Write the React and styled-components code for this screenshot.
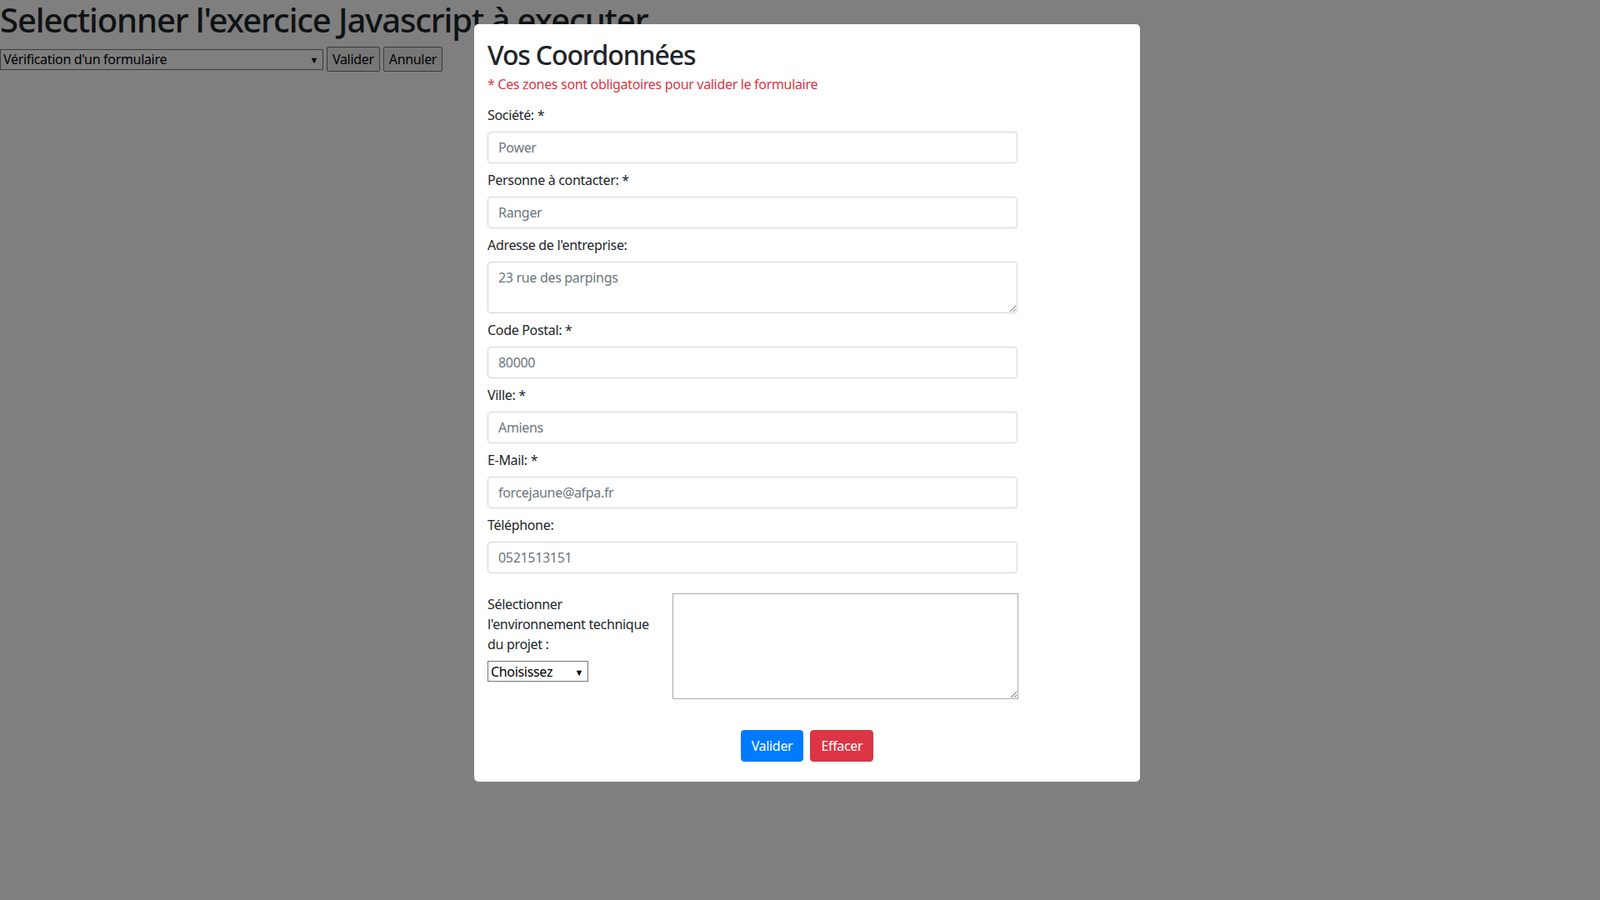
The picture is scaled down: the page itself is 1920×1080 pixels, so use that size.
import React from 'react'
import styled, { createGlobalStyle } from 'styled-components'

const GlobalStyle = createGlobalStyle`
  body {
    margin: 0;
    font-family: "Noto Sans", "Open Sans", sans-serif;
    font-size: 16px;
    line-height: 1.5;
    letter-spacing: -0.02em;
    color: #212529;
    background: #fff;
  }
`

const Page = styled.div`
  position: relative;
  min-height: 1080px;
`

const PageTitle = styled.h1`
  font-size: 40px;
  font-weight: 500;
  line-height: 1.2;
  letter-spacing: -0.028em;
  margin: 0 0 8px;
`

const Toolbar = styled.div`
  display: flex;
  align-items: center;
  gap: 4px;
`

// petit triangle noir du select natif
const SelectBox = styled.span`
  position: relative;
  display: flex;
  width: fit-content;
  &::after {
    content: '▼';
    position: absolute;
    right: 6px;
    top: 50%;
    transform: translateY(-50%);
    font-size: 11px;
    line-height: 1;
    color: #000;
    pointer-events: none;
  }
`

const NativeSelect = styled.select`
  appearance: none;
  font-family: inherit;
  letter-spacing: inherit;
  font-size: 16px;
  width: ${p => p.$width}px;
  height: 25px;
  padding: 0 16px 0 3px;
  border: 1px solid #767676;
  border-radius: 0;
  background: #fff;
  color: #000;
`

const PlainButton = styled.button`
  font-family: inherit;
  letter-spacing: inherit;
  font-size: 16px;
  line-height: 24px;
  height: 30px;
  padding: 1px 6px;
  border: 1px solid #767676;
  border-radius: 2px;
  background: #efefef;
  color: #000;
`

// voile sombre derrière la fenêtre modale
const Backdrop = styled.div`
  position: fixed;
  inset: 0;
  background: rgba(0, 0, 0, 0.5);
`

const Modal = styled.div`
  position: absolute;
  left: 569px;
  top: 29px;
  width: 799px;
  box-sizing: border-box;
  padding: 18px 16px 24px;
  background: #fff;
  border-radius: 5px;
`

const ModalTitle = styled.h2`
  font-size: 32px;
  font-weight: 500;
  line-height: 1.2;
  letter-spacing: -0.036em;
  margin: 0 0 4px;
`

const Required = styled.p`
  color: #dc3545;
  margin: 0 0 13px;
`

const FormGroup = styled.div`
  margin-bottom: 8px;
`

const Label = styled.label`
  display: block;
  margin-bottom: 8px;
`

const Field = styled.input`
  display: block;
  box-sizing: border-box;
  width: 636px;
  height: 38px;
  padding: 6px 12px;
  font-family: inherit;
  letter-spacing: inherit;
  font-size: 16px;
  line-height: 1.5;
  color: #495057;
  border: 1px solid #ced4da;
  border-radius: 4px;
  background: #fff;
  &::placeholder {
    color: #6c757d;
  }
`

const Area = styled(Field).attrs({ as: 'textarea' })`
  height: 62px;
  resize: vertical;
`

const TechRow = styled.div`
  display: flex;
  margin-top: 24px;
`

const TechLabelCol = styled.div`
  width: 222px;
  padding-top: 1px;
`

const TechArea = styled.textarea`
  box-sizing: border-box;
  width: 415px;
  height: 127px;
  border: 1px solid #a9a9a9;
  font-family: inherit;
`

const Actions = styled.div`
  display: flex;
  justify-content: center;
  gap: 8px;
  margin-top: 37px;
`

const ActionButton = styled.button`
  font-family: inherit;
  letter-spacing: inherit;
  font-size: 16px;
  line-height: 1.5;
  padding: 6px 12px;
  border: 1px solid ${p => p.$color};
  border-radius: 4px;
  background: ${p => p.$color};
  color: #fff;
`

const fields = [
  { label: 'Société: *', value: 'Power' },
  { label: 'Personne à contacter: *', value: 'Ranger' },
  { label: "Adresse de l'entreprise:", value: '23 rue des parpings', area: true },
  { label: 'Code Postal: *', value: '80000' },
  { label: 'Ville: *', value: 'Amiens' },
  { label: 'E-Mail: *', value: 'forcejaune@afpa.fr' },
  { label: 'Téléphone:', value: '0521513151' },
]

export default function App() {
  return (
    <Page>
      <GlobalStyle />
      <PageTitle>Selectionner l'exercice Javascript à executer</PageTitle>
      <Toolbar>
        <SelectBox>
          <NativeSelect $width={388}>
            <option>Vérification d'un formulaire</option>
          </NativeSelect>
        </SelectBox>
        <PlainButton>Valider</PlainButton>
        <PlainButton>Annuler</PlainButton>
      </Toolbar>

      <Backdrop />

      <Modal>
        <ModalTitle>Vos Coordonnées</ModalTitle>
        <Required>* Ces zones sont obligatoires pour valider le formulaire</Required>

        {fields.map(f => (
          <FormGroup key={f.label}>
            <Label>{f.label}</Label>
            {f.area ? <Area placeholder={f.value} /> : <Field placeholder={f.value} />}
          </FormGroup>
        ))}

        <TechRow>
          <TechLabelCol>
            <Label>
              Sélectionner<br />l'environnement technique<br />du projet :
            </Label>
            <SelectBox>
              <NativeSelect $width={121}>
                <option>Choisissez</option>
              </NativeSelect>
            </SelectBox>
          </TechLabelCol>
          <TechArea />
        </TechRow>

        <Actions>
          <ActionButton $color="#007bff">Valider</ActionButton>
          <ActionButton $color="#dc3545">Effacer</ActionButton>
        </Actions>
      </Modal>
    </Page>
  )
}
